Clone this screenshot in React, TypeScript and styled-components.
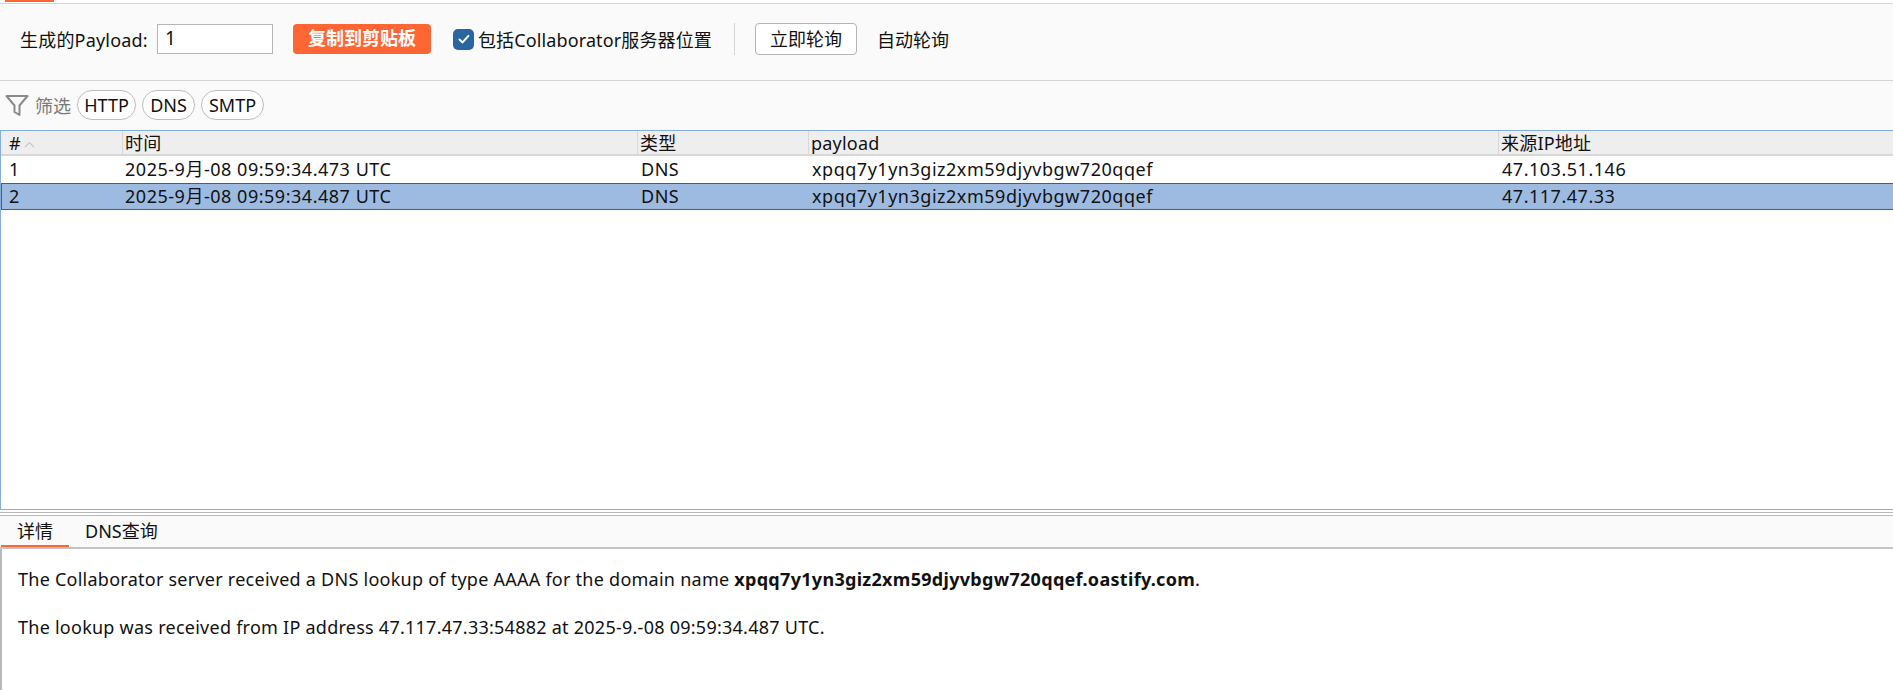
import React, { FC } from 'react'
import styled, { createGlobalStyle } from 'styled-components'

const COLUMNS = '121px 515px 171px 690px 1fr'

interface Interaction {
  id: number
  time: string
  type: string
  payload: string
  ip: string
  selected?: boolean
}

const rows: Interaction[] = [
  { id: 1, time: '2025-9月-08 09:59:34.473 UTC', type: 'DNS', payload: 'xpqq7y1yn3giz2xm59djyvbgw720qqef', ip: '47.103.51.146' },
  { id: 2, time: '2025-9月-08 09:59:34.487 UTC', type: 'DNS', payload: 'xpqq7y1yn3giz2xm59djyvbgw720qqef', ip: '47.117.47.33', selected: true },
]

const App: FC = () => {
  return (
    <Page>
      <GlobalStyle />
      <TopStrip>
        <TopAccent />
      </TopStrip>

      <Toolbar>
        <FieldLabel>生成的Payload:</FieldLabel>
        <PayloadInput>1</PayloadInput>
        <CopyButton>复制到剪贴板</CopyButton>
        <CheckLabel>
          <CheckBox>
            <svg width="14" height="14" viewBox="0 0 14 14" fill="none">
              <path d="M2.5 7.5 L5.6 10.4 L11.4 3.8" stroke="#fff" strokeWidth="2" strokeLinecap="round" strokeLinejoin="round" />
            </svg>
          </CheckBox>
          包括Collaborator服务器位置
        </CheckLabel>
        <Divider />
        <PollButton>立即轮询</PollButton>
        <PlainLabel>自动轮询</PlainLabel>
      </Toolbar>

      <FilterBar>
        <FilterIcon width="24" height="24" viewBox="0 0 24 24" fill="none">
          <path d="M1.5 3 H22.5 L14.5 12.5 V22 L9.5 19 V12.5 Z" stroke="#8a8a8a" strokeWidth="2" strokeLinejoin="round" />
        </FilterIcon>
        <FilterLabel>筛选</FilterLabel>
        <Pill $width={59}>HTTP</Pill>
        <Pill $width={53}>DNS</Pill>
        <Pill $width={63}>SMTP</Pill>
      </FilterBar>

      <TablePanel>
        <HeaderRow>
          <HeaderCell>
            #
            <SortIcon width="11" height="7" viewBox="0 0 11 7" fill="none">
              <path d="M1 6 L5.5 1.5 L10 6" stroke="#c8c8c8" strokeWidth="1.2" />
            </SortIcon>
          </HeaderCell>
          <HeaderCell>时间</HeaderCell>
          <HeaderCell>类型</HeaderCell>
          <HeaderCell>payload</HeaderCell>
          <HeaderCell>来源IP地址</HeaderCell>
        </HeaderRow>
        {rows.map((row) => (
          <DataRow key={row.id} $selected={row.selected}>
            <Cell>{row.id}</Cell>
            <Cell>{row.time}</Cell>
            <Cell>{row.type}</Cell>
            <Cell>{row.payload}</Cell>
            <Cell>{row.ip}</Cell>
          </DataRow>
        ))}
      </TablePanel>

      <DetailPanel>
        <Tabs>
          <Tab $active>详情</Tab>
          <Tab>DNS查询</Tab>
        </Tabs>
        <DetailBody>
          <p>
            The Collaborator server received a DNS lookup of type AAAA for the domain name{' '}
            <strong>xpqq7y1yn3giz2xm59djyvbgw720qqef.oastify.com</strong>.
          </p>
          <p>The lookup was received from IP address 47.117.47.33:54882 at 2025-9.-08 09:59:34.487 UTC.</p>
        </DetailBody>
      </DetailPanel>
    </Page>
  )
}

export default App

// Styles
const GlobalStyle = createGlobalStyle`
  html, body {
    margin: 0;
    padding: 0;
    background: #fff;
  }
  * {
    box-sizing: border-box;
  }
`

const Page = styled.div`
  width: 1893px;
  height: 690px;
  overflow: hidden;
  display: flex;
  flex-direction: column;
  background: #fff;
  color: #111;
  font-family: 'Noto Sans', 'Noto Sans CJK SC', sans-serif;
  font-size: 18px;
`

const TopStrip = styled.div`
  height: 4px;
  flex: none;
  background: #fff;
  border-bottom: 1px solid #d4d4d4;
  padding-left: 5px;
`

const TopAccent = styled.div`
  width: 49px;
  height: 2px;
  background: #ff6633;
`

const Toolbar = styled.div`
  height: 77px;
  flex: none;
  display: flex;
  align-items: center;
  padding: 0 0 6px 20px;
  background: #fafafa;
  border-bottom: 1px solid #d4d4d4;
`

const FieldLabel = styled.span`
  width: 137px;
  flex: none;
  letter-spacing: 0.2px;
  white-space: nowrap;
`

const PayloadInput = styled.div`
  width: 116px;
  height: 30px;
  margin-right: 20px;
  padding-left: 7px;
  font-size: 19px;
  line-height: 27px;
  background: #fff;
  border: 1px solid #b4b4b4;
`

const CopyButton = styled.div`
  width: 138px;
  height: 30px;
  margin-right: 22px;
  line-height: 29px;
  text-align: center;
  font-weight: 700;
  color: #fff;
  background: #ff6633;
  border-radius: 4px;
`

const CheckLabel = styled.label`
  width: 259px;
  flex: none;
  display: flex;
  align-items: center;
  gap: 4px;
  letter-spacing: 0.12px;
  white-space: nowrap;
`

const CheckBox = styled.span`
  width: 21px;
  height: 21px;
  display: flex;
  align-items: center;
  justify-content: center;
  background: #29659f;
  border-radius: 5px;
`

const Divider = styled.div`
  width: 1px;
  height: 32px;
  margin: 0 20px 0 22px;
  background: #d4d4d4;
`

const PollButton = styled.div`
  width: 102px;
  height: 32px;
  margin-right: 20px;
  line-height: 30px;
  text-align: center;
  background: #fff;
  border: 1px solid #b4b4b4;
  border-radius: 4px;
`

const PlainLabel = styled.span`
  white-space: nowrap;
`

const FilterBar = styled.div`
  height: 49px;
  flex: none;
  display: flex;
  align-items: center;
  padding: 0 0 2px 5px;
  background: #fafafa;
`

const FilterIcon = styled.svg`
  flex: none;
  margin-right: 6px;
`

const FilterLabel = styled.span`
  margin-right: 6px;
  color: #7a7a7a;
`

const Pill = styled.div<{ $width: number }>`
  width: ${({ $width }) => $width}px;
  height: 30px;
  margin-right: 6px;
  line-height: 28px;
  text-align: center;
  background: #fff;
  border: 1px solid #bdbdbd;
  border-radius: 15px;
`

const TablePanel = styled.div`
  height: 380px;
  flex: none;
  background: #fff;
  border: 1px solid #86aedb;
  border-right: none;
`

const HeaderRow = styled.div`
  height: 25px;
  display: grid;
  grid-template-columns: ${COLUMNS};
  background: #eeeeee;
  border-bottom: 2px solid #d8d8d8;
`

const HeaderCell = styled.div`
  display: flex;
  align-items: center;
  gap: 3px;
  padding: 2px 0 0 2px;
  line-height: 21px;
  letter-spacing: 0.2px;
  white-space: nowrap;
  border-left: 1px solid #d8d8d8;

  &:first-child {
    padding-left: 8px;
    border-left: none;
  }
`

const SortIcon = styled.svg`
  margin-top: 1px;
`

const DataRow = styled.div<{ $selected?: boolean }>`
  height: 27px;
  display: grid;
  grid-template-columns: ${COLUMNS};
  align-items: center;
  background: ${({ $selected }) => ($selected ? '#9dbbe1' : '#fff')};
  border: 1px solid ${({ $selected }) => ($selected ? '#2c659f' : 'transparent')};
  border-right: none;
`

const Cell = styled.div`
  padding-left: 3px;
  line-height: 25px;
  letter-spacing: 0.52px;
  white-space: nowrap;

  &:first-child {
    padding-left: 7px;
  }

  &:nth-child(2) {
    padding-left: 2px;
  }
`

const DetailPanel = styled.div`
  margin-top: 2px;
  flex: 1;
  display: flex;
  flex-direction: column;
  border-top: 1px solid #b8b8b8;
`

const Tabs = styled.div`
  height: 34px;
  flex: none;
  display: flex;
  margin-top: 2px;
  padding-left: 1px;
  background: #fafafa;
  border-top: 1px solid #b8b8b8;
  border-bottom: 2px solid #c4c4c4;
`

const Tab = styled.div<{ $active?: boolean }>`
  height: 31px;
  padding: 0 16px;
  line-height: 31px;
  white-space: nowrap;
  border-bottom: 2px solid ${({ $active }) => ($active ? '#ff6633' : 'transparent')};
`

const DetailBody = styled.div`
  flex: 1;
  padding: 18px 0 0 16px;
  background: #fff;
  border-left: 2px solid #b8b8b8;
  line-height: 24px;
  letter-spacing: 0.25px;

  p {
    margin: 0 0 24px;
    white-space: nowrap;
  }

  strong {
    font-weight: 700;
    letter-spacing: 0.3px;
  }
`
